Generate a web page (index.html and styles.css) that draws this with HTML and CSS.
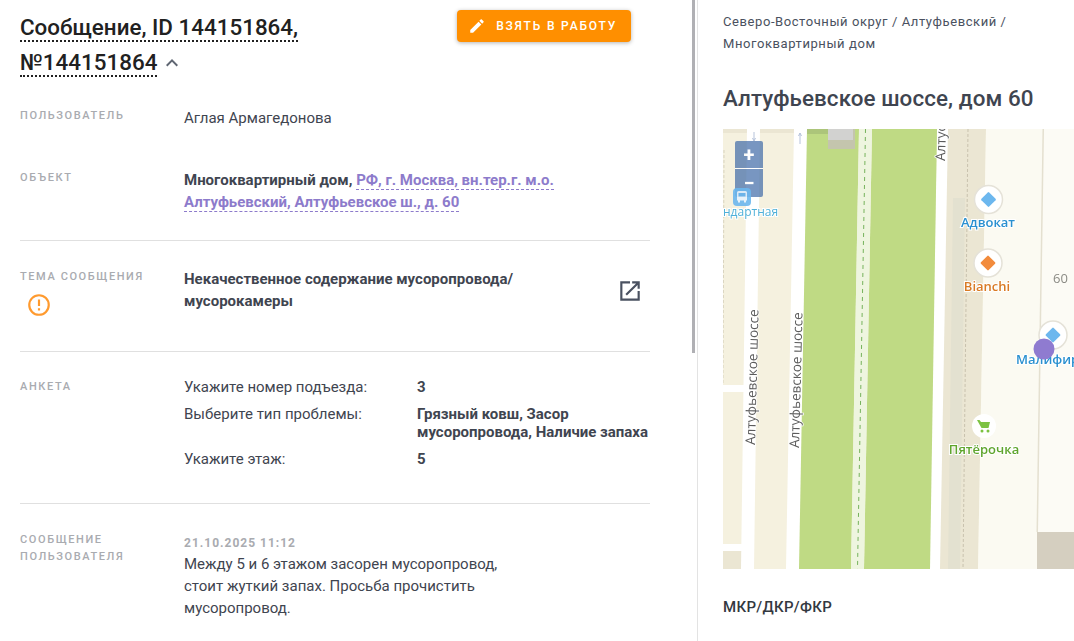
FILE: index.html
```html
<!DOCTYPE html>
<html lang="ru">
<head>
  <meta charset="UTF-8" />
  <title>Сообщение 144151864</title>
  <link rel="stylesheet" href="styles.css">
</head>
<body>

<div class="page">
  <main class="details">
    <header class="details-head">
      <h1 class="title">
        <span class="title-link">Сообщение, ID 144151864, №144151864</span>
        <svg class="chevron" viewBox="0 0 24 24"><path d="M7.41,15.41L12,10.83L16.59,15.41L18,14L12,8L6,14L7.41,15.41Z"/></svg>
      </h1>
      <button class="btn-take">
        <svg viewBox="0 0 24 24"><path d="M20.71,7.04C21.1,6.65 21.1,6 20.71,5.63L18.37,3.29C18,2.9 17.35,2.9 16.96,3.29L15.12,5.12L18.87,8.87M3,17.25V21H6.75L17.81,9.93L14.06,6.18L3,17.25Z"/></svg>
        Взять в работу
      </button>
    </header>

    <section class="row row-user">
      <div class="label">Пользователь</div>
      <div class="value">Аглая Армагедонова</div>
    </section>

    <section class="row row-object">
      <div class="label">Объект</div>
      <div class="value value-bold">Многоквартирный дом, <a class="object-link" href="#">РФ, г. Москва, вн.тер.г. м.о. Алтуфьевский, Алтуфьевское ш., д. 60</a></div>
    </section>

    <section class="row row-topic">
      <div class="label">
        Тема сообщения
        <svg class="alert" viewBox="0 0 24 24"><path d="M11,15H13V17H11V15M11,7H13V13H11V7M12,2C6.47,2 2,6.5 2,12A10,10 0 0,0 12,22A10,10 0 0,0 22,12A10,10 0 0,0 12,2M12,20A8,8 0 0,1 4,12A8,8 0 0,1 12,4A8,8 0 0,1 20,12A8,8 0 0,1 12,20Z"/></svg>
      </div>
      <div class="value value-bold topic">Некачественное содержание мусоропровода/ мусорокамеры</div>
      <svg class="open" viewBox="0 0 24 24"><path d="M14,3V5H17.59L7.76,14.83L9.17,16.24L19,6.41V10H21V3M19,19H5V5H12V3H3V21H21V12H19V19Z"/></svg>
    </section>

    <section class="row row-form">
      <div class="label">Анкета</div>
      <div class="form-grid">
        <div>Укажите номер подъезда:</div><b>3</b>
        <div>Выберите тип проблемы:</div><b>Грязный ковш, Засор мусоропровода, Наличие запаха</b>
        <div>Укажите этаж:</div><b>5</b>
      </div>
    </section>

    <section class="row row-message">
      <div class="label">Сообщение пользователя</div>
      <div class="message">
        <div class="message-date">21.10.2025 11:12</div>
        <div class="message-text">Между 5 и 6 этажом засорен мусоропровод, стоит жуткий запах. Просьба прочистить мусоропровод.</div>
      </div>
    </section>
  </main>

  <div class="scroll"><div class="scroll-thumb"></div></div>

  <aside class="side">
    <div class="crumbs">Северо-Восточный округ / Алтуфьевский / Многоквартирный дом</div>
    <h2 class="address">Алтуфьевское шоссе, дом 60</h2>

    <div class="map">
      <svg class="map-canvas" viewBox="723 129 351 440">
        <rect x="723" y="129" width="351" height="440" fill="#f5f1df"/>
        <!-- east side -->
        <polygon points="947,129 986,129 978,569 939,569" fill="#ebe6d3"/>
        <polygon points="953,198 965,198 960,569 948,569" fill="#e3e1d0"/>
        <polygon points="986,129 1074,129 1074,569 978,569" fill="#fbfaf2"/>
        <polygon points="1043,129 1074,129 1074,532 1037,532" fill="#fcfbf5"/>
        <polygon points="1042.5,129 1044,129 1038,532 1036.5,532" fill="#e4e0d0"/>
        <rect x="1037" y="532" width="37" height="37" fill="#d5cfc0"/>
        <line x1="968" y1="129" x2="963" y2="569" stroke="#c9c2ae" stroke-dasharray="3 2"/>
        <line x1="724" y1="150" x2="723" y2="385" stroke="#d8d3bf" stroke-dasharray="3 2"/>
        <!-- cross roads -->
        <rect x="723" y="129" width="224" height="4" fill="#ebe6d3"/>
        <rect x="723" y="385" width="24" height="7" fill="#fff"/>
        <rect x="723" y="551" width="22" height="18" fill="#ebe6d3"/>
        <rect x="723" y="544" width="24" height="7" fill="#fff"/>
        <!-- roads -->
        <polygon points="747,129 760,129 754,569 741,569" fill="#fff"/>
        <polygon points="794,129 808,129 800,569 786,569" fill="#fff"/>
        <polygon points="937,129 948,129 940,569 929,569" fill="#fff"/>
        <!-- greens -->
        <polygon points="807,129 859,129 851,569 799,569" fill="#bfda84"/>
        <polygon points="872,129 937,129 930,569 864,569" fill="#bfda84"/>
        <polygon points="859,129 872,129 864,569 851,569" fill="#eef5df"/>
        <line x1="865.5" y1="129" x2="857.5" y2="569" stroke="#76b35c" stroke-dasharray="4 4"/>
        <!-- building -->
        <rect x="807" y="129" width="22" height="5" fill="#acc57a"/>
        <rect x="828" y="129" width="27" height="20" fill="#c4c5ad"/>
        <rect x="828" y="129" width="25" height="11" fill="#d2d2d0"/>
        <!-- arrows -->
        <path d="M800,133 v11 M798.5,136 L800,133 L801.5,136" stroke="#b6c3da" fill="none"/>
        <path d="M754,132 v9 M752.5,138 L754,141 L755.5,138" stroke="#b6c3da" fill="none"/>
        <!-- labels -->
        <text class="road" transform="translate(755,445) rotate(-88.5)">Алтуфьевское шоссе</text>
        <text class="road" transform="translate(799,448) rotate(-88.5)">Алтуфьевское шоссе</text>
        <text class="road" transform="translate(945,161) rotate(-88.5)">Алтуфьевское шоссе</text>
        <text class="num" x="1053" y="283">60</text>
        <!-- pois -->
        <circle cx="988.500" cy="199.500" r="14" fill="#fff" stroke="#e5e2d8" stroke-width="1.500"/>
        <rect x="983" y="194" width="11" height="11" rx="1" fill="#6cb7ee" transform="rotate(45 988.5 199.5)"/>
        <text class="poi poi-blue" x="988" y="227" text-anchor="middle">Адвокат</text>
        <circle cx="988" cy="263" r="14" fill="#fff" stroke="#e5e2d8" stroke-width="1.500"/>
        <rect x="982.500" y="257.500" width="11" height="11" rx="1" fill="#f28b3c" transform="rotate(45 988 263)"/>
        <text class="poi poi-orange" x="987" y="291" text-anchor="middle">Bianchi</text>
        <circle cx="1053" cy="335" r="14" fill="#fff" stroke="#e5e2d8" stroke-width="1.500"/>
        <rect x="1047.500" y="329.500" width="11" height="11" rx="1" fill="#6cb7ee" transform="rotate(45 1053 335)"/>
        <text class="poi poi-blue" x="1016" y="364">Малифир</text>
        <circle cx="984" cy="426" r="12" fill="#fff"/>
        <path d="M977,420 h2.500 l1.500,2 h9 l-1.500,6 h-7 z" fill="#7cc242"/>
        <circle cx="982" cy="431" r="1.500" fill="#7cc242"/>
        <circle cx="988" cy="431" r="1.500" fill="#7cc242"/>
        <text class="poi poi-green" x="984" y="454" text-anchor="middle">Пятёрочка</text>
        <circle cx="1044" cy="349" r="10.500" fill="#8f7bd0"/>
        <text class="poi poi-stop" x="723" y="216">ндартная</text>
      </svg>
      <div class="zoom">
        <div class="zoom-btn">+</div>
        <div class="zoom-btn">−</div>
      </div>
      <svg class="stop" viewBox="0 0 18 18">
        <rect width="18" height="18" rx="4" fill="#6cb7ee"/>
        <path d="M4,4.500 a1.500,1.500 0 0 1 1.500,-1.500 h7 a1.500,1.500 0 0 1 1.500,1.500 v8 h-1 v2 h-2 v-2 h-4 v2 h-2 v-2 h-1 z" fill="#e6f3fd"/>
        <rect x="5.500" y="5" width="7" height="3.500" fill="#6cb7ee"/>
      </svg>
    </div>

    <div class="kind">МКР/ДКР/ФКР</div>
  </aside>
</div>

</body>
</html>
```

FILE: styles.css
```css
html, body {
  margin: 0;
  height: 100%;
  overflow: hidden;
}

body {
  font-family: 'Roboto', 'Liberation Sans', sans-serif;
  background: #fff;
  color: #3f4550;
}

.page {
  display: flex;
  height: 641px;
}

/* Left column */
.details {
  width: 650px;
  flex: none;
  padding-left: 20px;
  box-sizing: border-box;
}

.details-head {
  display: flex;
  justify-content: space-between;
  align-items: flex-start;
  padding-top: 10px;
  padding-right: 19px;
}

.title {
  width: 320px;
  margin: 0;
  font-size: 22.4px;
  font-weight: 500;
  line-height: 35px;
  color: #212121;
}

.title-link {
  border-bottom: 2px dotted #212121;
}

.chevron {
  width: 24px;
  height: 24px;
  margin-left: -3px;
  fill: #5f6672;
  vertical-align: -5px;
}

.btn-take {
  display: flex;
  align-items: center;
  gap: 10px;
  height: 32px;
  padding: 0 14px 0 11px;
  border: none;
  border-radius: 4px;
  background: #ff8f00;
  color: #fff;
  font-family: inherit;
  font-size: 12px;
  font-weight: 500;
  letter-spacing: 1.8px;
  text-transform: uppercase;
  box-shadow: 0 1px 4px rgba(0, 0, 0, 0.3);
}

.btn-take svg {
  width: 18px;
  height: 18px;
  fill: #fff;
}

.row {
  display: flex;
  position: relative;
  box-sizing: border-box;
}

.label {
  width: 164px;
  flex: none;
  font-size: 11px;
  font-weight: 500;
  line-height: 17px;
  letter-spacing: 1.6px;
  color: #a9abb0;
  text-transform: uppercase;
}

.value {
  font-size: 15px;
  line-height: 22px;
}

.value-bold {
  font-weight: 700;
}

.row-user {
  padding-top: 27px;
  height: 56px;
}

.row-object {
  padding-top: 33px;
  height: 105px;
  border-bottom: 1px solid #e0e0e0;
}

.object-link {
  color: #8d7bcb;
  text-decoration: none;
  border-bottom: 1px dashed #8d7bcb;
}

.row-topic {
  height: 111px;
  padding-top: 27px;
  border-bottom: 1px solid #e0e0e0;
}

.alert {
  display: block;
  width: 26px;
  height: 26px;
  margin: 7px 0 0 6px;
  fill: #ff9a2e;
}

.topic {
  width: 350px;
}

.open {
  position: absolute;
  right: 7px;
  top: 37px;
  width: 26px;
  height: 26px;
  fill: #4a5160;
}

.row-form {
  height: 152px;
  padding-top: 26px;
  border-bottom: 1px solid #e0e0e0;
}

.form-grid {
  display: grid;
  grid-template-columns: 233px 1fr;
  align-content: start;
  row-gap: 9px;
  font-size: 15px;
  line-height: 18px;
}

.form-grid b {
  font-weight: 700;
}

.row-message {
  padding-top: 27px;
}

.message {
  width: 330px;
  margin-top: 3px;
  font-size: 15px;
  line-height: 22px;
}

.message-date {
  font-size: 12px;
  font-weight: 700;
  line-height: 18px;
  letter-spacing: 1px;
  margin-bottom: 1px;
  color: #a9abb0;
}

/* Scrollbar */
.scroll {
  width: 48px;
  flex: none;
  border-right: 1px solid #e3e3e3;
  box-sizing: border-box;
  display: flex;
  justify-content: flex-end;
  padding-right: 2px;
}

.scroll-thumb {
  width: 3px;
  height: 353px;
  background: #b0b0b4;
}

/* Right column */
.side {
  flex: 1;
  min-width: 0;
  padding: 11px 0 0 25px;
}

.crumbs {
  width: 310px;
  font-size: 13px;
  line-height: 22px;
  letter-spacing: 0.58px;
  color: #4a5160;
}

.address {
  margin: 29px 0 17px;
  font-size: 22.4px;
  font-weight: 500;
  line-height: 28px;
  letter-spacing: 0.08px;
  white-space: nowrap;
  color: #3f4550;
}

.map {
  position: relative;
  height: 440px;
  overflow: hidden;
}

.map-canvas {
  display: block;
  width: 351px;
  height: 440px;
  filter: blur(0.4px);
}

.road {
  font-family: 'Open Sans', 'Noto Sans', sans-serif;
  font-size: 13.5px;
  fill: #5c5c5c;
  stroke: #fff;
  stroke-width: 1.5px;
  paint-order: stroke;
}

.num {
  font-family: 'Open Sans', 'Noto Sans', sans-serif;
  font-size: 13px;
  fill: #8b8b85;
}

.poi {
  font-family: 'Open Sans', 'Noto Sans', sans-serif;
  font-size: 13px;
  font-weight: 600;
  stroke: #fff;
  stroke-width: 2px;
  paint-order: stroke;
}

.poi-blue { fill: #2a90d0; }
.poi-orange { fill: #d97a24; }
.poi-green { fill: #5fa52e; }
.poi-stop { fill: #4fb0d8; font-weight: 400; font-size: 12px; }

.zoom {
  position: absolute;
  left: 12px;
  top: 12px;
  width: 28px;
  opacity: 0.7;
}

.zoom-btn {
  height: 28px;
  background: #3f6ba8;
  color: #fff;
  font-size: 20px;
  font-weight: 700;
  line-height: 28px;
  text-align: center;
}

.zoom-btn:first-child {
  border-bottom: 1px solid #fff;
  border-radius: 2px 2px 0 0;
  box-sizing: border-box;
}

.zoom-btn:last-child {
  border-radius: 0 0 2px 2px;
}

/* transit stop sits over the zoom control in the reference */
.stop {
  position: absolute;
  left: 10px;
  top: 59px;
  width: 18px;
  height: 18px;
  opacity: 0.9;
}

.kind {
  margin-top: 29px;
  font-size: 15px;
  font-weight: 500;
  line-height: 18px;
  letter-spacing: 0.3px;
  color: #33383f;
}
```
